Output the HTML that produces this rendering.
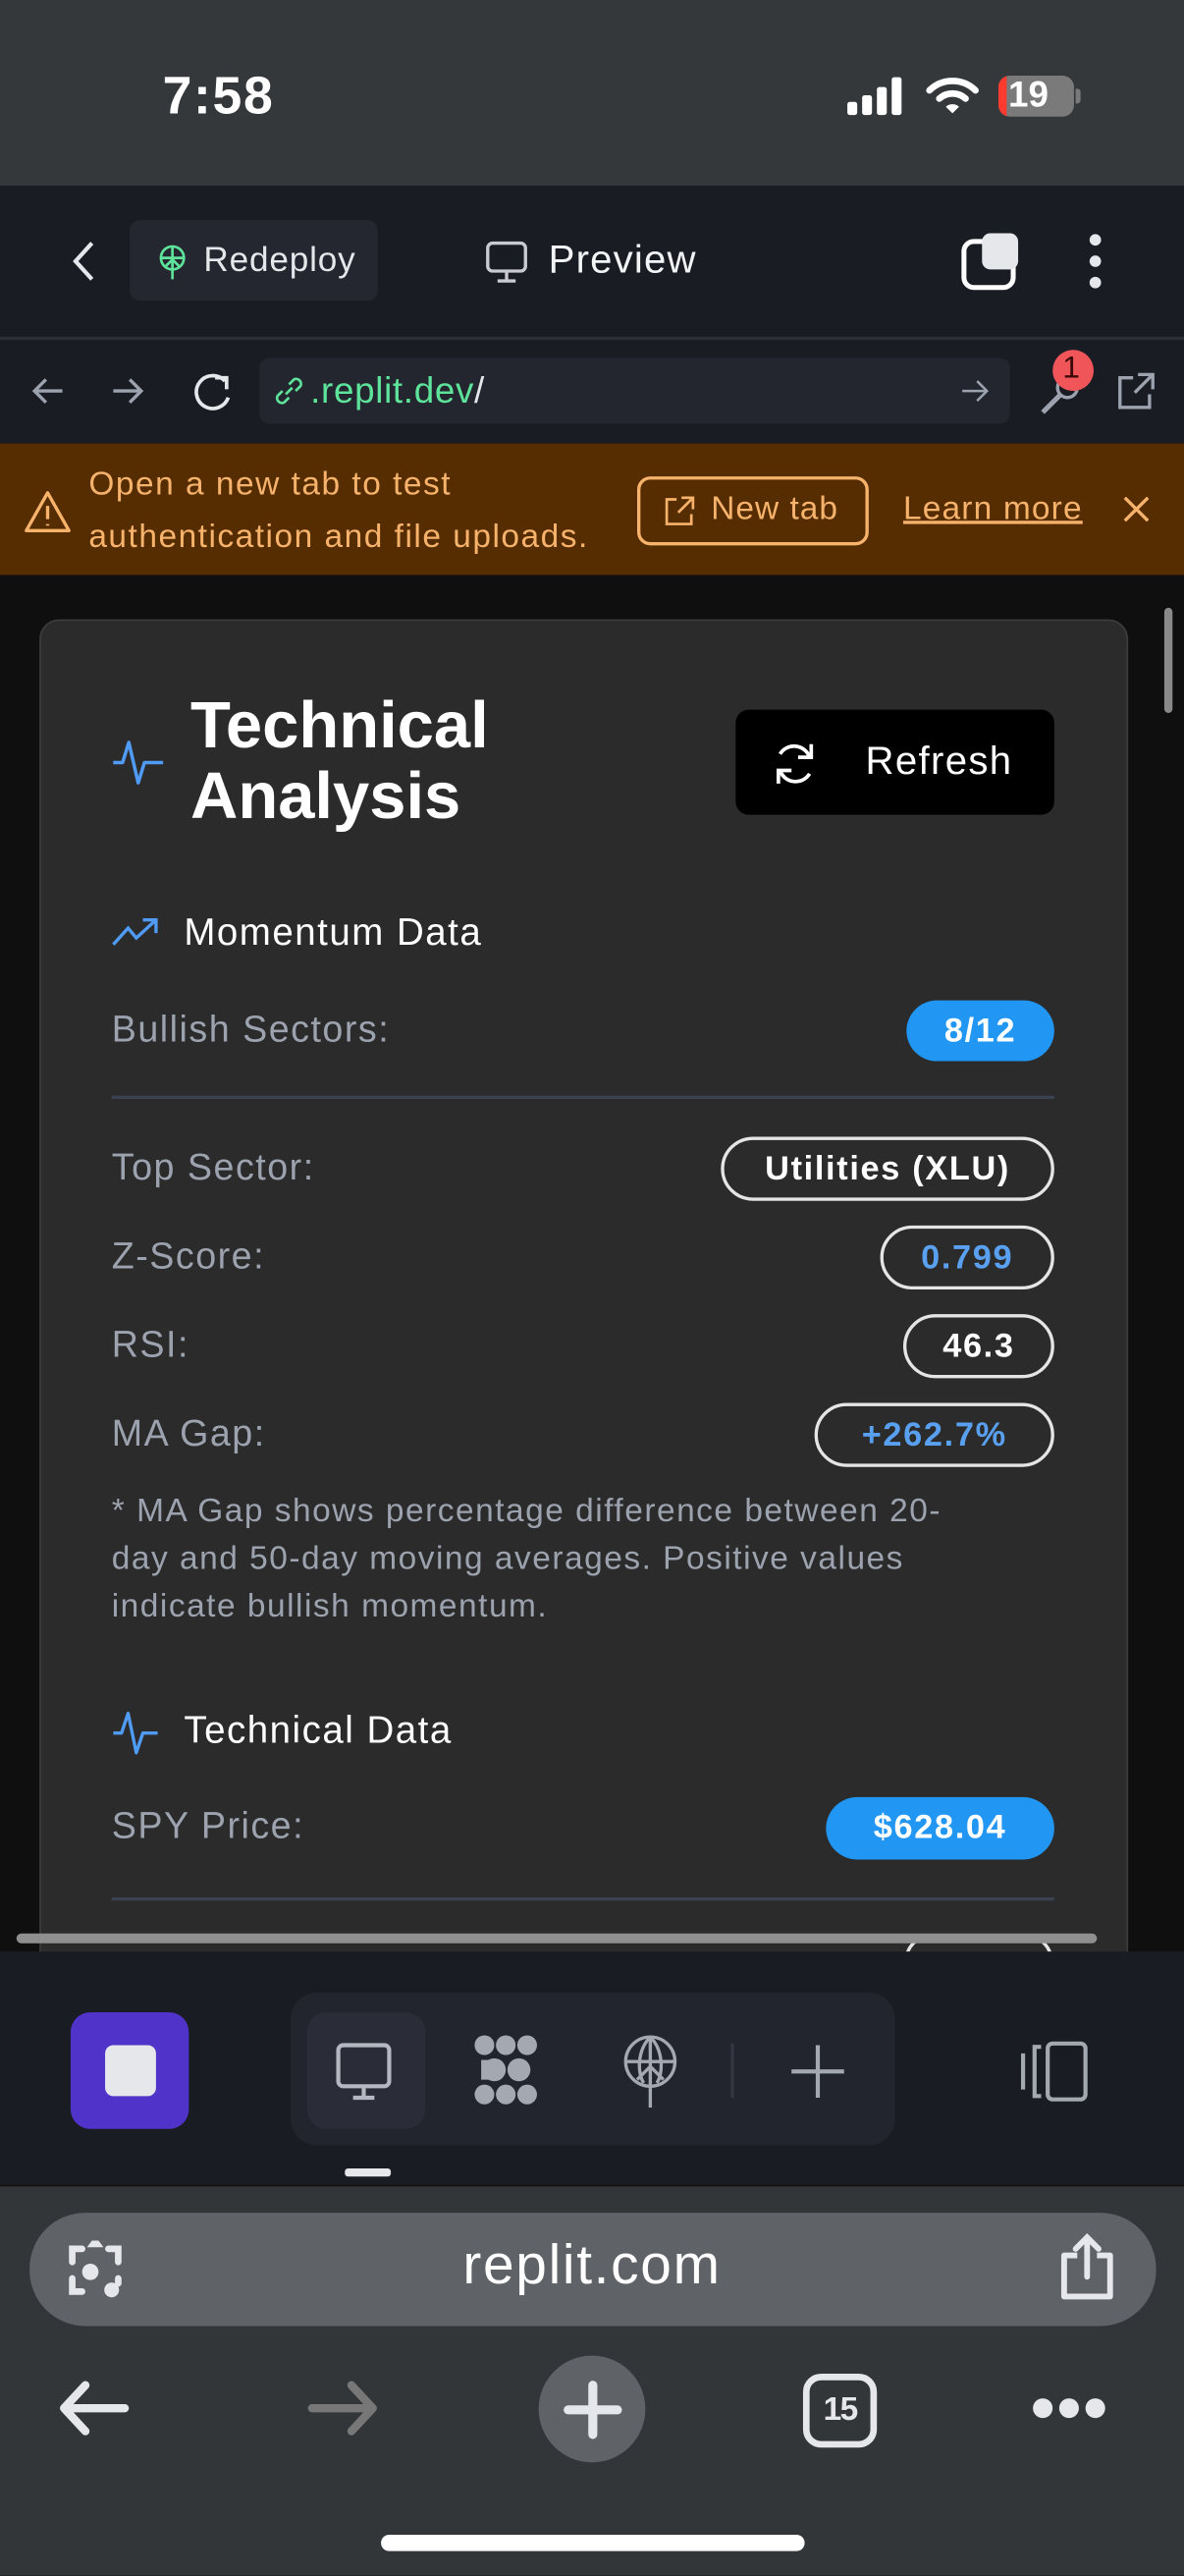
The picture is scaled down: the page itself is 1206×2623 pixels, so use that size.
<!DOCTYPE html>
<html><head><meta charset="utf-8"><style>
*{margin:0;padding:0;box-sizing:border-box}
html,body{width:1206px;height:2622px;overflow:hidden;background:#0f0f0f}
#w{position:absolute;left:0;top:0;width:721px;height:1568px;transform:scale(1.67268);transform-origin:0 0;font-family:"Liberation Sans",sans-serif;overflow:hidden;background:#0f0f0f}
.a{position:absolute}
.t{position:absolute;white-space:nowrap;line-height:1}
.lab{color:#9ca3af;font-size:22.5px;left:68px;letter-spacing:0.9px}
.bd{position:absolute;border-radius:20px;font-weight:bold;font-size:20.5px;letter-spacing:1px;display:flex;align-items:center;justify-content:center;color:#fff}
.ol{border:2px solid #e5e5e5;color:#fff}
svg{position:absolute;overflow:visible}
</style></head><body><div id="w">
<div class="a" style="left:0;top:0;width:721px;height:113px;background:#35383b"></div>
<div class="t" style="left:99px;top:42px;font-size:32px;font-weight:bold;color:#fff;letter-spacing:1px">7:58</div>
<svg style="left:516px;top:47px" width="36" height="24"><rect x="0" y="15" width="6" height="8" rx="1.5" fill="#fff"/><rect x="9" y="11" width="6" height="12" rx="1.5" fill="#fff"/><rect x="18" y="6" width="6" height="17" rx="1.5" fill="#fff"/><rect x="27" y="0" width="6" height="23" rx="1.5" fill="#fff"/></svg>
<svg style="left:564px;top:46px" width="32" height="24"><path d="M2 9 A20 20 0 0 1 30 9" stroke="#fff" stroke-width="4" fill="none" stroke-linecap="round"/><path d="M8 14 A12 12 0 0 1 24 14" stroke="#fff" stroke-width="4" fill="none" stroke-linecap="round"/><path d="M12 19 L16 23 L20 19 A6 6 0 0 0 12 19Z" fill="#fff"/></svg>
<div class="a" style="left:608px;top:46px;width:46px;height:25px;border-radius:7px;background:#7a7a7a;overflow:hidden"><div style="width:5px;height:25px;background:#ff3b30"></div></div>
<div class="a" style="left:655px;top:54px;width:3px;height:9px;background:#7a7a7a;border-radius:0 2px 2px 0"></div>
<div class="t" style="left:614px;top:47px;font-size:22px;font-weight:bold;color:#fff">19</div>
<div class="a" style="left:0;top:113px;width:721px;height:157px;background:#1a1c24"></div>
<div class="a" style="left:0;top:205px;width:721px;height:2px;background:#2c2f38"></div>
<svg style="left:42px;top:146px" width="16" height="26"><path d="M14 2 L4 13 L14 24" stroke="#e5e7eb" stroke-width="2.5" fill="none"/></svg>
<div class="a" style="left:79px;top:134px;width:151px;height:49px;border-radius:6px;background:#24272f"></div>
<svg style="left:96px;top:148px" width="18" height="24"><circle cx="9" cy="9" r="7" stroke="#5ee39a" stroke-width="1.6" fill="none"/><path d="M2 9 H16 M9 2 V22 M5 14 L9 10 L13 14" stroke="#5ee39a" stroke-width="1.6" fill="none"/></svg>
<div class="t" style="left:124px;top:148px;font-size:21px;color:#e5e7eb;letter-spacing:0.5px">Redeploy</div>
<svg style="left:296px;top:147px" width="26" height="26"><rect x="1" y="1" width="23" height="17" rx="3" stroke="#c9cbd1" stroke-width="2" fill="none"/><path d="M12.5 18 V23 M7 24 H18" stroke="#c9cbd1" stroke-width="2"/></svg>
<div class="t" style="left:334px;top:147px;font-size:24px;color:#f3f4f6;letter-spacing:0.7px">Preview</div>
<svg style="left:585px;top:141px" width="38" height="36"><rect x="2" y="6" width="30" height="28" rx="6" stroke="#fff" stroke-width="3" fill="none"/><rect x="13" y="1" width="22" height="22" rx="5" fill="#e5e7eb"/></svg>
<svg style="left:661px;top:141px" width="12" height="36"><circle cx="6" cy="5" r="3.5" fill="#e5e7eb"/><circle cx="6" cy="18" r="3.5" fill="#e5e7eb"/><circle cx="6" cy="31" r="3.5" fill="#e5e7eb"/></svg>
<svg style="left:18px;top:228px" width="22" height="20"><path d="M20 10 H3 M10 3 L3 10 L10 17" stroke="#9ca3af" stroke-width="2" fill="none"/></svg>
<svg style="left:67px;top:228px" width="22" height="20"><path d="M2 10 H19 M12 3 L19 10 L12 17" stroke="#9ca3af" stroke-width="2" fill="none"/></svg>
<svg style="left:117px;top:226px" width="26" height="26"><path d="M20 6 A10 10 0 1 0 22 16" stroke="#e5e7eb" stroke-width="2.2" fill="none"/><path d="M14 4 L21 4 L21 11" stroke="#e5e7eb" stroke-width="2.2" fill="none"/></svg>
<div class="a" style="left:158px;top:218px;width:457px;height:40px;border-radius:6px;background:#23262f"></div>
<svg style="left:166px;top:228px" width="20" height="20"><path d="M8 12 L12 8 M6 10 L3 13 A3 3 0 0 0 7 17 L10 14 M14 10 L17 7 A3 3 0 0 0 13 3 L10 6" stroke="#5ee39a" stroke-width="1.6" fill="none"/></svg>
<div class="t" style="left:189px;top:227px;font-size:22px;color:#5ee39a;letter-spacing:0.4px">.replit.dev<span style="color:#e5e7eb">/</span></div>
<svg style="left:585px;top:230px" width="18" height="16"><path d="M1 8 H16 M10 2 L16 8 L10 14" stroke="#9ca3af" stroke-width="1.5" fill="none"/></svg>
<svg style="left:632px;top:228px" width="28" height="26"><circle cx="18" cy="8" r="6" stroke="#9ca3af" stroke-width="2" fill="none"/><path d="M14 12 L3 23" stroke="#9ca3af" stroke-width="3"/></svg>
<div class="a" style="left:641px;top:213px;width:25px;height:25px;border-radius:50%;background:#f0555a"></div>
<div class="t" style="left:647px;top:215px;font-size:19px;color:#3a0a0a">1</div>
<svg style="left:680px;top:226px" width="24" height="24"><path d="M10 4 H2 V22 H20 V14 M13 2 H22 V11 M22 2 L11 13" stroke="#9ca3af" stroke-width="2" fill="none"/></svg>
<div class="a" style="left:0;top:270px;width:721px;height:80px;background:#552d00"></div>
<svg style="left:14px;top:298px" width="30" height="28"><path d="M15 2 L28 25 H2 Z" stroke="#f7b26c" stroke-width="2" fill="none" stroke-linejoin="round"/><path d="M15 10 V18 M15 21 V22" stroke="#f7b26c" stroke-width="2"/></svg>
<div class="t" style="left:54px;top:279px;font-size:20px;color:#f7b26c;line-height:32px;letter-spacing:0.9px">Open a new tab to test<br>authentication and file uploads.</div>
<div class="a" style="left:388px;top:290px;width:141px;height:42px;border:2px solid #f7b26c;border-radius:8px"></div>
<svg style="left:404px;top:301px" width="20" height="20"><path d="M8 3 H2 V18 H17 V12 M11 2 H18 V9 M18 2 L9 11" stroke="#f7b26c" stroke-width="1.6" fill="none"/></svg>
<div class="t" style="left:433px;top:300px;font-size:20px;color:#f7b26c;letter-spacing:0.6px">New tab</div>
<div class="t" style="left:550px;top:300px;font-size:20px;color:#f7b26c;text-decoration:underline;letter-spacing:0.7px">Learn more</div>
<svg style="left:683px;top:301px" width="18" height="18"><path d="M2 2 L16 16 M16 2 L2 16" stroke="#f7b26c" stroke-width="2"/></svg>
<div class="a" style="left:24px;top:377px;width:663px;height:900px;background:#2b2b2b;border:1.5px solid #3d3d3d;border-radius:12px"></div>
<div class="a" style="left:709px;top:370px;width:5px;height:64px;border-radius:3px;background:#8a8a8a"></div>
<svg style="left:68px;top:450px" width="34" height="30"><path d="M1 15 H7 L11 2 L17 28 L21 15 H33" stroke="#4f9bf5" stroke-width="2.2" fill="none" stroke-linejoin="round" transform="scale(0.95)"/></svg>
<div class="t" style="left:116px;top:421px;font-size:40px;font-weight:bold;color:#fff;letter-spacing:0px;line-height:43px">Technical<br>Analysis</div>
<div class="a" style="left:448px;top:432px;width:194px;height:64px;border-radius:8px;background:#000"></div>
<svg style="left:471px;top:451px" width="26" height="28"><path d="M22 10 A10 10 0 0 0 4 8 M4 18 A10 10 0 0 0 22 20" stroke="#fff" stroke-width="2.2" fill="none"/><path d="M23 2 V10 H15 M3 26 V18 H11" stroke="#fff" stroke-width="2.2" fill="none"/></svg>
<div class="t" style="left:527px;top:452px;font-size:24px;color:#fff;letter-spacing:0.8px">Refresh</div>
<svg style="left:68px;top:558px" width="30" height="20"><path d="M1 17 L10 7 L15 13 L27 2 M19 2 H27 V10" stroke="#4f9bf5" stroke-width="2" fill="none"/></svg>
<div class="t" style="left:112px;top:556px;font-size:23px;color:#fff;letter-spacing:0.9px">Momentum Data</div>
<div class="t lab" style="top:616px">Bullish Sectors:</div>
<div class="bd" style="left:552px;top:609px;width:90px;height:37px;background:#2196f3">8/12</div>
<div class="a" style="left:68px;top:667px;width:574px;height:2px;background:#3a4252"></div>
<div class="t lab" style="top:700px">Top Sector:</div>
<div class="bd ol" style="left:439px;top:692px;width:203px;height:39px">Utilities (XLU)</div>
<div class="t lab" style="top:754px">Z-Score:</div>
<div class="bd ol" style="left:536px;top:746px;width:106px;height:39px;color:#5aa0f0">0.799</div>
<div class="t lab" style="top:808px">RSI:</div>
<div class="bd ol" style="left:550px;top:800px;width:92px;height:39px">46.3</div>
<div class="t lab" style="top:862px">MA Gap:</div>
<div class="bd ol" style="left:496px;top:854px;width:146px;height:39px;color:#5aa0f0">+262.7%</div>
<div class="t" style="left:68px;top:906px;font-size:20px;color:#9ca3af;line-height:29px;letter-spacing:0.9px">* MA Gap shows percentage difference between 20-<br>day and 50-day moving averages. Positive values<br>indicate bullish momentum.</div>
<svg style="left:68px;top:1041px" width="30" height="28"><path d="M1 14 H6 L10 2 L15 26 L19 14 H28" stroke="#4f9bf5" stroke-width="2" fill="none" stroke-linejoin="round"/></svg>
<div class="t" style="left:112px;top:1042px;font-size:23px;color:#fff;letter-spacing:0.9px">Technical Data</div>
<div class="t lab" style="top:1101px">SPY Price:</div>
<div class="bd" style="left:503px;top:1094px;width:139px;height:38px;background:#2196f3">$628.04</div>
<div class="a" style="left:68px;top:1155px;width:574px;height:2px;background:#3a4252"></div>
<div class="a" style="left:551px;top:1178px;width:90px;height:30px;border:2px solid #e5e5e5;border-radius:20px"></div>
<div class="a" style="left:10px;top:1177px;width:658px;height:6px;border-radius:3px;background:#8f8f8f"></div>
<div class="a" style="left:0;top:1188px;width:721px;height:142px;background:#1a1c24"></div>
<div class="a" style="left:43px;top:1225px;width:72px;height:71px;border-radius:12px;background:#5034c9"></div>
<div class="a" style="left:64px;top:1245px;width:31px;height:31px;border-radius:5px;background:#e5e7eb"></div>
<div class="a" style="left:177px;top:1213px;width:368px;height:93px;border-radius:16px;background:#22252e"></div>
<div class="a" style="left:187px;top:1225px;width:72px;height:71px;border-radius:12px;background:#2a2d38"></div>
<svg style="left:204px;top:1243px" width="36" height="36"><rect x="2" y="2" width="31" height="25" rx="3" stroke="#b4b8c0" stroke-width="2.5" fill="none"/><path d="M17.5 27 V33 M11 34 H24" stroke="#b4b8c0" stroke-width="2.5"/></svg>
<svg style="left:287px;top:1238px" width="46" height="46" fill="#a3a8b1"><ellipse cx="8" cy="7" rx="6" ry="6"/><ellipse cx="21" cy="7" rx="6" ry="6"/><ellipse cx="34" cy="7" rx="6" ry="6"/><ellipse cx="14" cy="22" rx="7" ry="7"/><ellipse cx="29" cy="22" rx="7" ry="7"/><ellipse cx="8" cy="37" rx="6" ry="6"/><ellipse cx="21" cy="37" rx="6" ry="6"/><ellipse cx="34" cy="37" rx="6" ry="6"/><rect x="6" y="16" width="10" height="12"/></svg>
<svg style="left:378px;top:1238px" width="36" height="46"><circle cx="18" cy="17" r="15" stroke="#a3a8b1" stroke-width="2" fill="none"/><path d="M3 17 H33 M18 2 V45 M10 28 L18 20 L26 28 M18 2 C10 10 10 24 14 30 M18 2 C26 10 26 24 22 30" stroke="#a3a8b1" stroke-width="2" fill="none"/></svg>
<div class="a" style="left:445px;top:1244px;width:2px;height:33px;background:#343742"></div>
<svg style="left:480px;top:1243px" width="36" height="36"><path d="M18 2 V34 M2 18 H34" stroke="#a3a8b1" stroke-width="2.5"/></svg>
<svg style="left:620px;top:1242px" width="44" height="38"><path d="M3 8 V30" stroke="#a3a8b1" stroke-width="2.5"/><path d="M14 4 H10 V34 H14" stroke="#a3a8b1" stroke-width="2.5" fill="none"/><rect x="18" y="2" width="23" height="34" rx="3" stroke="#a3a8b1" stroke-width="2.5" fill="none"/></svg>
<div class="a" style="left:210px;top:1320px;width:28px;height:5px;border-radius:2px;background:#e5e7eb"></div>
<div class="a" style="left:0;top:1330px;width:721px;height:238px;background:#333639"></div>
<div class="a" style="left:0;top:1330px;width:721px;height:1px;background:#111"></div>
<div class="a" style="left:18px;top:1347px;width:686px;height:69px;border-radius:34px;background:#5f6367"></div>
<svg style="left:40px;top:1363px" width="36" height="38"><path d="M10 6 H4 V14 M4 24 V32 H10 M26 6 H32 V14 M32 24 V27" stroke="#e5e7eb" stroke-width="4" fill="none" stroke-linecap="round"/><circle cx="15" cy="20" r="5" fill="#e5e7eb"/><circle cx="28" cy="31" r="4.5" fill="#e5e7eb"/><path d="M13 5 H23 L20 1 H16Z" fill="#e5e7eb"/></svg>
<div class="t" style="left:0;width:721px;text-align:center;top:1362px;font-size:34px;color:#fff;letter-spacing:1px">replit.com</div>
<svg style="left:644px;top:1360px" width="36" height="40"><path d="M12 13 H4 V38 H32 V13 H24" stroke="#e5e7eb" stroke-width="3.5" fill="none" stroke-linejoin="round"/><path d="M18 26 V2 M11 9 L18 2 L25 9" stroke="#e5e7eb" stroke-width="3.5" fill="none" stroke-linecap="round"/></svg>
<svg style="left:34px;top:1448px" width="46" height="36"><path d="M42 18 H6 M18 4 L5 18 L18 32" stroke="#e5e7eb" stroke-width="5" fill="none" stroke-linecap="round" stroke-linejoin="round"/></svg>
<svg style="left:186px;top:1448px" width="46" height="36"><path d="M4 18 H40 M28 4 L41 18 L28 32" stroke="#777" stroke-width="5" fill="none" stroke-linecap="round" stroke-linejoin="round"/></svg>
<div class="a" style="left:328px;top:1434px;width:65px;height:65px;border-radius:50%;background:#5f6367"></div>
<svg style="left:343px;top:1449px" width="36" height="36"><path d="M18 3 V33 M3 18 H33" stroke="#e5e7eb" stroke-width="5.5" stroke-linecap="round"/></svg>
<div class="a" style="left:489px;top:1445px;width:45px;height:45px;border:4px solid #e5e7eb;border-radius:11px"></div>
<div class="t" style="left:489px;top:1457px;width:45px;text-align:center;font-size:20px;font-weight:bold;color:#e5e7eb;letter-spacing:-1px">15</div>
<svg style="left:628px;top:1458px" width="46" height="16" fill="#e5e7eb"><circle cx="7" cy="8" r="6"/><circle cx="23" cy="8" r="6"/><circle cx="39" cy="8" r="6"/></svg>
<div class="a" style="left:232px;top:1543px;width:258px;height:10px;border-radius:5px;background:#fff"></div>
</div></body></html>
